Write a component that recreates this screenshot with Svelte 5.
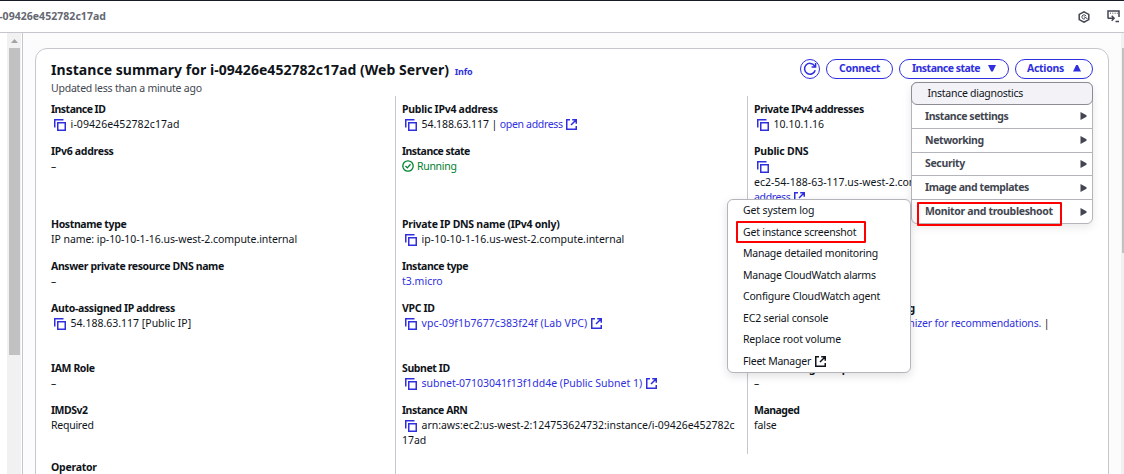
<script>
  // ls / vs: letter spacing of the label / value, in pixels
  const columns = [
    [
      { label: 'Instance ID', ls: -0.52, value: 'i-09426e452782c17ad', vs: 0.08, copy: true, h: 42 },
      { label: 'IPv6 address', ls: -0.3, value: '–', h: 73 },
      { label: 'Hostname type', ls: -0.38, value: 'IP name: ip-10-10-1-16.us-west-2.compute.internal', vs: -0.06, h: 42 },
      { label: 'Answer private resource DNS name', ls: -0.38, value: '–', h: 42 },
      { label: 'Auto-assigned IP address', ls: -0.33, value: '54.188.63.117 [Public IP]', vs: 0, copy: true, h: 60 },
      { label: 'IAM Role', ls: -0.4, value: '–', h: 42 },
      { label: 'IMDSv2', ls: -0.5, value: 'Required', vs: -0.25, h: 57 },
      { label: 'Operator', ls: -0.25, h: 42 }
    ],
    [
      { label: 'Public IPv4 address', ls: -0.26, value: '54.188.63.117 | ', link: 'open address', vs: -0.1, lk: -0.32, copy: true, ext: true, h: 42 },
      { label: 'Instance state', ls: -0.53, status: 'Running', vs: -0.3, h: 73 },
      { label: 'Private IP DNS name (IPv4 only)', ls: -0.26, value: 'ip-10-10-1-16.us-west-2.compute.internal', copy: true, h: 42 },
      { label: 'Instance type', ls: -0.43, link: 't3.micro', h: 42 },
      { label: 'VPC ID', ls: -0.35, link: 'vpc-09f1b7677c383f24f (Lab VPC)', lk: 0.07, copy: true, ext: true, h: 60 },
      { label: 'Subnet ID', ls: -0.4, link: 'subnet-07103041f13f1dd4e (Public Subnet 1)', lk: -0.01, copy: true, ext: true, h: 42 },
      { label: 'Instance ARN', ls: -0.46, value: 'arn:aws:ec2:us-west-2:124753624732:instance/i-09426e452782c17ad', vs: -0.03, copy: true, h: 57 }
    ],
    [
      { label: 'Private IPv4 addresses', ls: -0.37, value: '10.10.1.16', copy: true, h: 42 },
      { label: 'Public DNS', ls: -0.2, dns: true, h: 157 },
      { label: 'AWS Compute Optimizer finding', ls: -0.25, optimizer: true, h: 60 },
      { label: 'Auto Scaling Group name', ls: -0.33, value: '–', h: 42 },
      { label: 'Managed', ls: -0.5, value: 'false', vs: -0.1, h: 42 }
    ]
  ];
  const groups = [
    ['Instance settings', -0.44],
    ['Networking', -0.4],
    ['Security', -0.35],
    ['Image and templates', -0.42],
    ['Monitor and troubleshoot', -0.33]
  ];
  const items = [
    ['Get system log', -0.14],
    ['Get instance screenshot', -0.22],
    ['Manage detailed monitoring', -0.23],
    ['Manage CloudWatch alarms', -0.25],
    ['Configure CloudWatch agent', -0.2],
    ['EC2 serial console', -0.17],
    ['Replace root volume', -0.17],
    ['Fleet Manager', -0.23]
  ];
</script>

{#snippet copyIcon()}
  <svg class="copy" width="12" height="12" viewBox="0 0 12 12"><path d="M.75 8.5V.75H9.5M3.75 3.75h7.5v7.5h-7.5z" /></svg>
{/snippet}
{#snippet extIcon()}
  <svg class="ext" width="11" height="11" viewBox="0 0 11 11"><path d="M4 .75H.75v9.5h9.5V7M6.2 .75h4.05v4.1M10 1 5 6" /></svg>
{/snippet}

<div class="page">
  <header>
    <span class="crumb">i-09426e452782c17ad</span>
    <div class="tools">
      <svg width="12" height="12" viewBox="0 0 12 12"><path d="M6 .8 10.8 3.4v5.2L6 11.2 1.2 8.6V3.4z" /><path stroke-width="1" d="M8 5.2A2.1 2.1 0 1 0 7 7.8M5.8 5.6 9.6 7.8" /></svg>
      <svg width="13" height="13" viewBox="0 0 13 13"><path d="M1 8.5V1h11v6M1 8.2h2M2.3 8.2h4.4M4.7 5.8l2.4 2.4-2.4 2.5M8.5 11.5H12" /><path stroke-width="1" d="M3 3.2h1M5.3 3.2h1M7.6 3.2h1M9.8 3.2h1" /></svg>
    </div>
  </header>
  <div class="body">
    <div class="leftbar">
      <svg class="up" width="7" height="4" viewBox="0 0 7 4"><path d="M0 4 3.5 0 7 4z" /></svg>
      <div class="thumb"></div>
    </div>
    <main>
      <section class="card">
        <div class="head">
          <div class="title">
            <h1>Instance summary for i-09426e452782c17ad (Web Server) <a>Info</a></h1>
            <p>Updated less than a minute ago</p>
          </div>
          <div class="buttons">
            <button class="refresh" aria-label="Refresh"><svg width="14" height="14" viewBox="0 0 14 14"><path d="M12.2 8.2A5.4 5.4 0 1 1 11.5 3.8L12.6 5M12.6 1v4H8.6" /></svg></button>
            <button class="connect">Connect</button>
            <button class="state">Instance state <svg width="8" height="7" viewBox="0 0 8 7"><path d="M0 0h8L4.8 6.5H3.2z" /></svg></button>
            <button class="actions">Actions <svg width="8" height="7" viewBox="0 0 8 7"><path d="M0 6.5h8L4.8 0H3.2z" /></svg></button>
          </div>
        </div>
        <div class="cols">
          {#each columns as col, i}
            <div class="col c{i}">
              {#each col as f}
                <div class="field" style:height="{f.h}px">
                  <div class="label" style:letter-spacing="{f.ls}px">{f.label}</div>
                  <div class="value" style:letter-spacing="{f.vs ?? 0}px">
                    {#if f.copy}{@render copyIcon()}{/if}{#if f.status}<span class="running"><svg width="12" height="12" viewBox="0 0 12 12"><circle cx="6" cy="6" r="5.2" /><path d="m3.5 6 1.8 1.9 3.2-3.6" /></svg>{f.status}</span>{/if}{#if f.value}{f.value}{/if}{#if f.link}<a style:letter-spacing="{f.lk ?? 0}px">{f.link}</a>{/if}{#if f.ext}{@render extIcon()}{/if}
                    {#if f.dns}
                      {@render copyIcon()}
                      <div class="host">ec2-54-188-63-117.us-west-2.compute.amazonaws.com</div>
                      <div><a class="tight">address</a>{@render extIcon()}</div>
                    {/if}
                    {#if f.optimizer}
                      <div class="opt"><svg width="12" height="12" viewBox="0 0 12 12"><circle cx="6" cy="6" r="5.2" /><path d="M6 5v4M6 3v1" /></svg><a>Opt-in to AWS Compute Optimizer for recommendations.</a> |</div>
                    {/if}
                  </div>
                </div>
              {/each}
            </div>
          {/each}
        </div>
      </section>
    </main>
    <div class="rightbar"><div></div></div>
  </div>

  <div class="menu">
    <div class="selected">Instance diagnostics</div>
    {#each groups as [g, ls]}
      <div class="group"><span style:letter-spacing="{ls}px">{g}</span><svg width="7" height="8" viewBox="0 0 7 8"><path d="M.5 0 6.5 3.3v1.4L.5 8z" /></svg></div>
    {/each}
  </div>
  <div class="submenu">
    {#each items as [it, ls], i}
      <div class="item" style:letter-spacing="{ls}px">{it}{#if i === 7}{@render extIcon()}{/if}</div>
    {/each}
  </div>
  <div class="mark m1"></div>
  <div class="mark m2"></div>
</div>

<style>
  .page { position: relative; width: 1124px; height: 474px; overflow: hidden; box-sizing: border-box; border-top: 1px solid #161d26; background: #fff; font: 10.5px/15px "Noto Sans", sans-serif; color: #0f141a; display: flex; flex-direction: column; }
  .page * { box-sizing: border-box; }
  header { height: 32px; flex: none; border-bottom: 1px solid #c6c6cd; display: flex; align-items: center; justify-content: space-between; padding-right: 4px; }
  .crumb { font-weight: 700; color: #656871; margin-left: -4px; letter-spacing: 0.04px; }
  .tools { display: flex; gap: 17px; align-items: center; }
  svg { flex: none; fill: none; }
  .tools svg { stroke: #424650; stroke-width: 1.5; }
  .body { flex: 1; min-height: 0; display: flex; }
  .leftbar { width: 16px; margin-left: 7px; border-right: 1px solid #c6c6cd; background: linear-gradient(90deg, #f1f1f1 14px, #fff 14px); padding: 6px 0 0 2px; flex: none; }
  .up { display: block; margin: 0 0 5px 2px; fill: #a3a3a3; }
  .thumb { width: 11px; height: 307px; background: #c1c1c1; }
  main { flex: 1; background: #fcfcfd; padding: 15px 12px 0; min-width: 0; }
  .card { height: 500px; border: 1px solid #c6c6cd; border-radius: 12px; background: #fff; padding: 9px 15px 0; }
  .head { display: flex; justify-content: space-between; height: 38px; }
  h1 { font-size: 14px; line-height: 20px; margin: 2px 0 -1px; font-weight: 700; white-space: nowrap; letter-spacing: 0.04px; }
  h1 a { font-size: 9px; margin-left: 2px; letter-spacing: -0.2px; }
  p { margin: 0; color: #424650; line-height: 15px; letter-spacing: -0.22px; }
  a { color: #2f2fe0; }
  .buttons { display: flex; gap: 6px; padding-top: 1px; }
  button { height: 20px; border: 1.5px solid #2f2fe0; border-radius: 10px; color: #2f2fe0; background: #fff; font: 700 10.5px/15px "Noto Sans", sans-serif; padding: 0 0 1px; display: flex; align-items: center; justify-content: center; gap: 8px; white-space: nowrap; letter-spacing: -0.3px; }
  button svg { fill: #2f2fe0; }
  .refresh { width: 20px; }
  .refresh svg { fill: none; stroke: #2f2fe0; stroke-width: 1.5; }
  .connect { width: 67px; }
  .state { width: 110px; letter-spacing: -0.5px; }
  .actions { width: 78px; gap: 9px; }
  .cols { display: flex; }
  .col { flex: none; padding-top: 6px; }
  .c0 { width: 344px; }
  .c1 { width: 352px; border-left: 1px solid #c6c6cd; padding-left: 6px; height: 400px; }
  .c2 { width: 346px; border-left: 1px solid #c6c6cd; padding-left: 6px; height: 358px; }
  .label { font-weight: 700; }
  .value { word-break: break-all; width: 336px; }
  .copy { stroke: #2f2fe0; stroke-width: 1.5; margin: 0 4.6px 0 3px; vertical-align: -3px; }
  .ext { stroke: #2f2fe0; stroke-width: 1.5; margin-left: 3.5px; vertical-align: -2px; }
  .running { color: #00802f; }
  .running svg { stroke: #00802f; stroke-width: 1.3; vertical-align: -2px; margin-right: 3px; }
  .host, .opt { white-space: nowrap; }
  .host { line-height: 16px; }
  .tight { letter-spacing: -0.35px; }
  .opt { letter-spacing: -0.17px; }
  .opt svg { stroke: #2f2fe0; margin-right: 3px; vertical-align: -2px; }
  .rightbar { width: 3px; background: #f1f1f1; padding-top: 15px; }
  .rightbar div { height: 205px; margin-left: 1px; background: #c1c1c1; }
  .menu { position: absolute; left: 911px; top: 81px; width: 182px; height: 142px; border: 1px solid #b4b4bb; border-radius: 6px; background: #fff; box-shadow: 0 3px 10px #00071618; }
  .selected { height: 23px; margin: -1px -1px 0; border: 1px solid #8c8c94; border-radius: 6px; background: #f3f3f7; padding: 3px 0 0 15.5px; letter-spacing: -0.27px; }
  .group { height: 23.75px; border-bottom: 1px solid #b4b4bb; padding: 0 5px 0 13px; display: flex; align-items: center; justify-content: space-between; font-weight: 700; color: #424650; }
  .group:last-child { border: 0; }
  .group svg { fill: #424650; }
  .submenu { position: absolute; left: 727px; top: 198px; width: 184px; height: 174px; border: 1px solid #b4b4bb; border-radius: 6px; background: #fff; box-shadow: 0 3px 10px #00071620; }
  .item { height: 21.5px; padding: 3px 0 0 15px; }
  .submenu .ext { stroke: #0f141a; }
  .mark { position: absolute; border: 2px solid #f00; border-radius: 1px; }
  .m1 { left: 917px; top: 201px; width: 145px; height: 24px; }
  .m2 { left: 736px; top: 220px; width: 130px; height: 22px; }
</style>
